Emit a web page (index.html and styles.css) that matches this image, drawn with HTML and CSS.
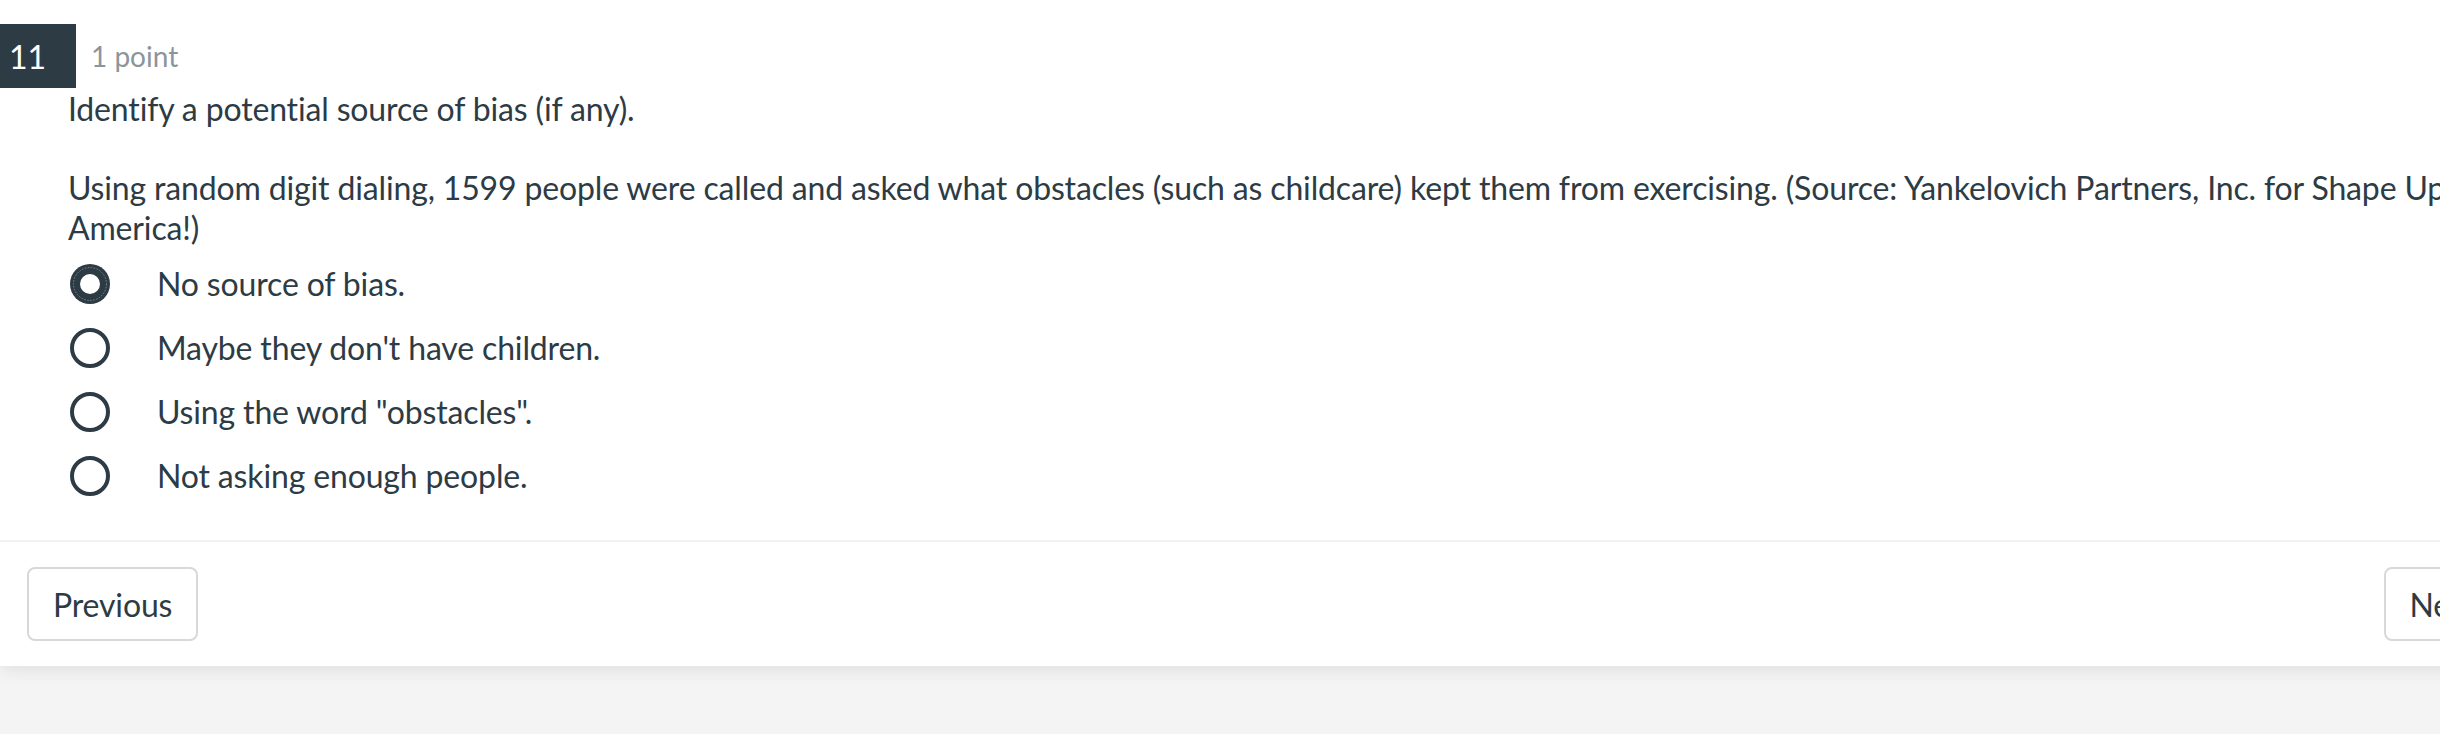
FILE: index.html
```html
<!DOCTYPE html>
<html lang="en">
<head>
<meta charset="utf-8">
<title>Question 11</title>
<link rel="stylesheet" href="styles.css">
</head>
<body>
<div class="page">
  <div class="card">
    <section class="question">
      <div class="q-header">
        <span class="q-num">11</span>
        <span class="q-points">1 point</span>
      </div>
      <div class="q-body">
        <p>Identify a potential source of bias (if any).</p>
        <p>Using random digit dialing, 1599 people were called and asked what obstacles (such as childcare) kept them from exercising. (Source: Yankelovich Partners, Inc. for Shape Up America!)</p>
        <ul class="choices">
          <li class="choice">
            <svg class="radio" width="40" height="40" viewBox="0 0 40 40">
              <circle cx="20" cy="20" r="20" fill="#2d3b45"/>
              <circle cx="20" cy="20" r="16.5" fill="none" stroke="#8e99a1" stroke-width="0.8" stroke-dasharray="1.5 1.5"/>
              <circle cx="20" cy="20" r="10" fill="#ffffff"/>
            </svg>
            <span class="choice-label">No source of bias.</span>
          </li>
          <li class="choice">
            <svg class="radio" width="40" height="40" viewBox="0 0 40 40">
              <circle cx="20" cy="20" r="18" fill="none" stroke="#2d3b45" stroke-width="4"/>
            </svg>
            <span class="choice-label">Maybe they don't have children.</span>
          </li>
          <li class="choice">
            <svg class="radio" width="40" height="40" viewBox="0 0 40 40">
              <circle cx="20" cy="20" r="18" fill="none" stroke="#2d3b45" stroke-width="4"/>
            </svg>
            <span class="choice-label">Using the word "obstacles".</span>
          </li>
          <li class="choice">
            <svg class="radio" width="40" height="40" viewBox="0 0 40 40">
              <circle cx="20" cy="20" r="18" fill="none" stroke="#2d3b45" stroke-width="4"/>
            </svg>
            <span class="choice-label">Not asking enough people.</span>
          </li>
        </ul>
      </div>
    </section>
    <footer class="footer">
      <button class="btn">Previous</button>
      <button class="btn">Next</button>
    </footer>
  </div>
</div>
</body>
</html>
```

FILE: styles.css
```css
html, body {
  margin: 0;
  padding: 0;
  overflow: hidden;
  background: #f4f4f4;
}

body {
  font-family: Lato, "Open Sans", "Liberation Sans", sans-serif;
  color: #2d3b45;
  height: 734px;
}

.page {
  width: 2530px;
}

.card {
  background: #ffffff;
  box-shadow: 0 3px 18px rgba(0, 0, 0, 0.09);
}

.question {
  padding-top: 24px;
  padding-bottom: 32px;
  border-bottom: 2px solid #f1f1f1;
}

.q-header {
  display: flex;
  align-items: center;
  height: 64px;
}

.q-num {
  box-sizing: border-box;
  width: 76px;
  height: 64px;
  padding-left: 9px;
  display: flex;
  align-items: center;
  background: #2d3b45;
  color: #ffffff;
  font-size: 32px;
}

.q-points {
  margin-left: 15px;
  font-size: 28px;
  color: #8b959d;
}

.q-body {
  padding: 0 68px;
  font-size: 32px;
  line-height: 40px;
  letter-spacing: -0.15px;
}

.q-body p {
  margin: 0;
}

.q-body p:first-child {
  padding-top: 1px;
}

.q-body p + p {
  margin-top: 39px;
}

.choices {
  list-style: none;
  margin: 4px 0 0 0;
  padding: 0;
}

.choice {
  display: flex;
  align-items: center;
  height: 64px;
}

.radio {
  flex: none;
  margin-left: 2px;
}

.choice-label {
  margin-left: 47px;
}

.footer {
  display: flex;
  align-items: center;
  justify-content: space-between;
  padding: 25px 27px;
}

.btn {
  box-sizing: border-box;
  height: 74px;
  padding: 0 24px;
  background: #ffffff;
  border: 2px solid #d8d8d8;
  border-radius: 8px;
  font-family: Lato, "Open Sans", "Liberation Sans", sans-serif;
  font-size: 32px;
  letter-spacing: -0.15px;
  color: #2d3b45;
}
```
